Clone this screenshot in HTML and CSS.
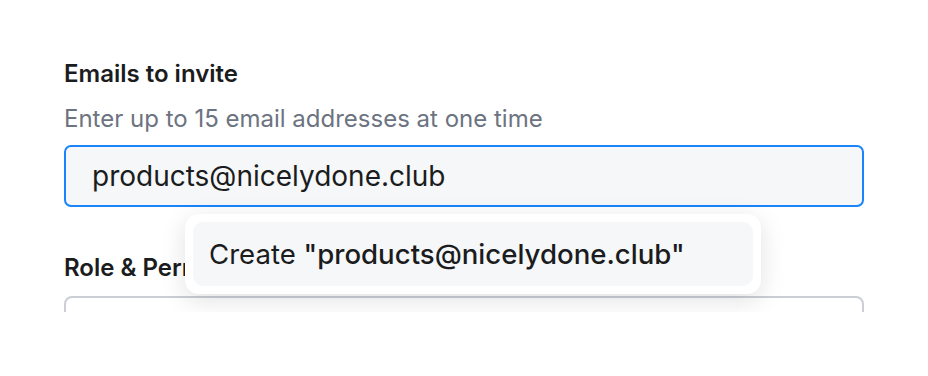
FILE: index.html
```html
<!DOCTYPE html>
<html lang="en">
<head>
    <meta charset="UTF-8">
    <meta name="viewport" content="width=device-width, initial-scale=1.0">
    <title>Invite members</title>
    <link rel="stylesheet" href="styles.css">
</head>
<body>
    <div class="frame">
        <div class="field">
            <div class="label">Emails to invite</div>
            <div class="hint">Enter up to 15 email addresses at one time</div>
            <div class="input-wrap">
                <div class="input focused">products@nicelydone.club</div>
                <div class="dropdown">
                    <div class="option">Create <strong>"products@nicelydone.club"</strong></div>
                </div>
            </div>
        </div>

        <div class="field role">
            <div class="label">Role &amp; Permissions</div>
            <div class="input plain"></div>
        </div>
    </div>
</body>
</html>
```

FILE: styles.css
```css
body {
    margin: 0;
    background: #fff;
    font-family: Inter, "Noto Sans", sans-serif;
    color: #1b1c20;
}
.frame {
    height: 312px;
    overflow: hidden;
    padding: 58px 64px 0 64px;
    box-sizing: border-box;
}
.field {
    width: 800px;
}
.label {
    font-size: 24px;
    font-weight: 600;
    line-height: 32px;
}
.hint {
    margin-top: 13px;
    font-size: 24px;
    line-height: 32px;
    color: #6c7381;
}
.input-wrap {
    position: relative;
    margin-top: 10px;
}
.input {
    box-sizing: border-box;
    height: 62px;
    border-radius: 7px;
    background: #f6f7f9;
    font-size: 28px;
    line-height: 58px;
    padding: 0 26px;
}
.focused {
    border: 2px solid #1a84fb;
}
.plain {
    border: 2px solid #cbced5;
    background: #fff;
    border-radius: 8px;
}
.dropdown {
    position: absolute;
    top: 69px;
    left: 121px;
    width: 576px;
    height: 80px;
    box-sizing: border-box;
    padding: 8px;
    background: #fff;
    border-radius: 14px;
    box-shadow: 0 6px 24px rgba(20, 24, 34, 0.13);
}
.option {
    height: 64px;
    border-radius: 10px;
    background: #f6f7f9;
    padding: 0 16px;
    box-sizing: border-box;
    font-size: 27.6px;
    line-height: 64px;
    white-space: nowrap;
}
.option strong {
    font-weight: 500;
}
.role {
    margin-top: 45px;
}
.role .plain {
    margin-top: 12px;
}
```
